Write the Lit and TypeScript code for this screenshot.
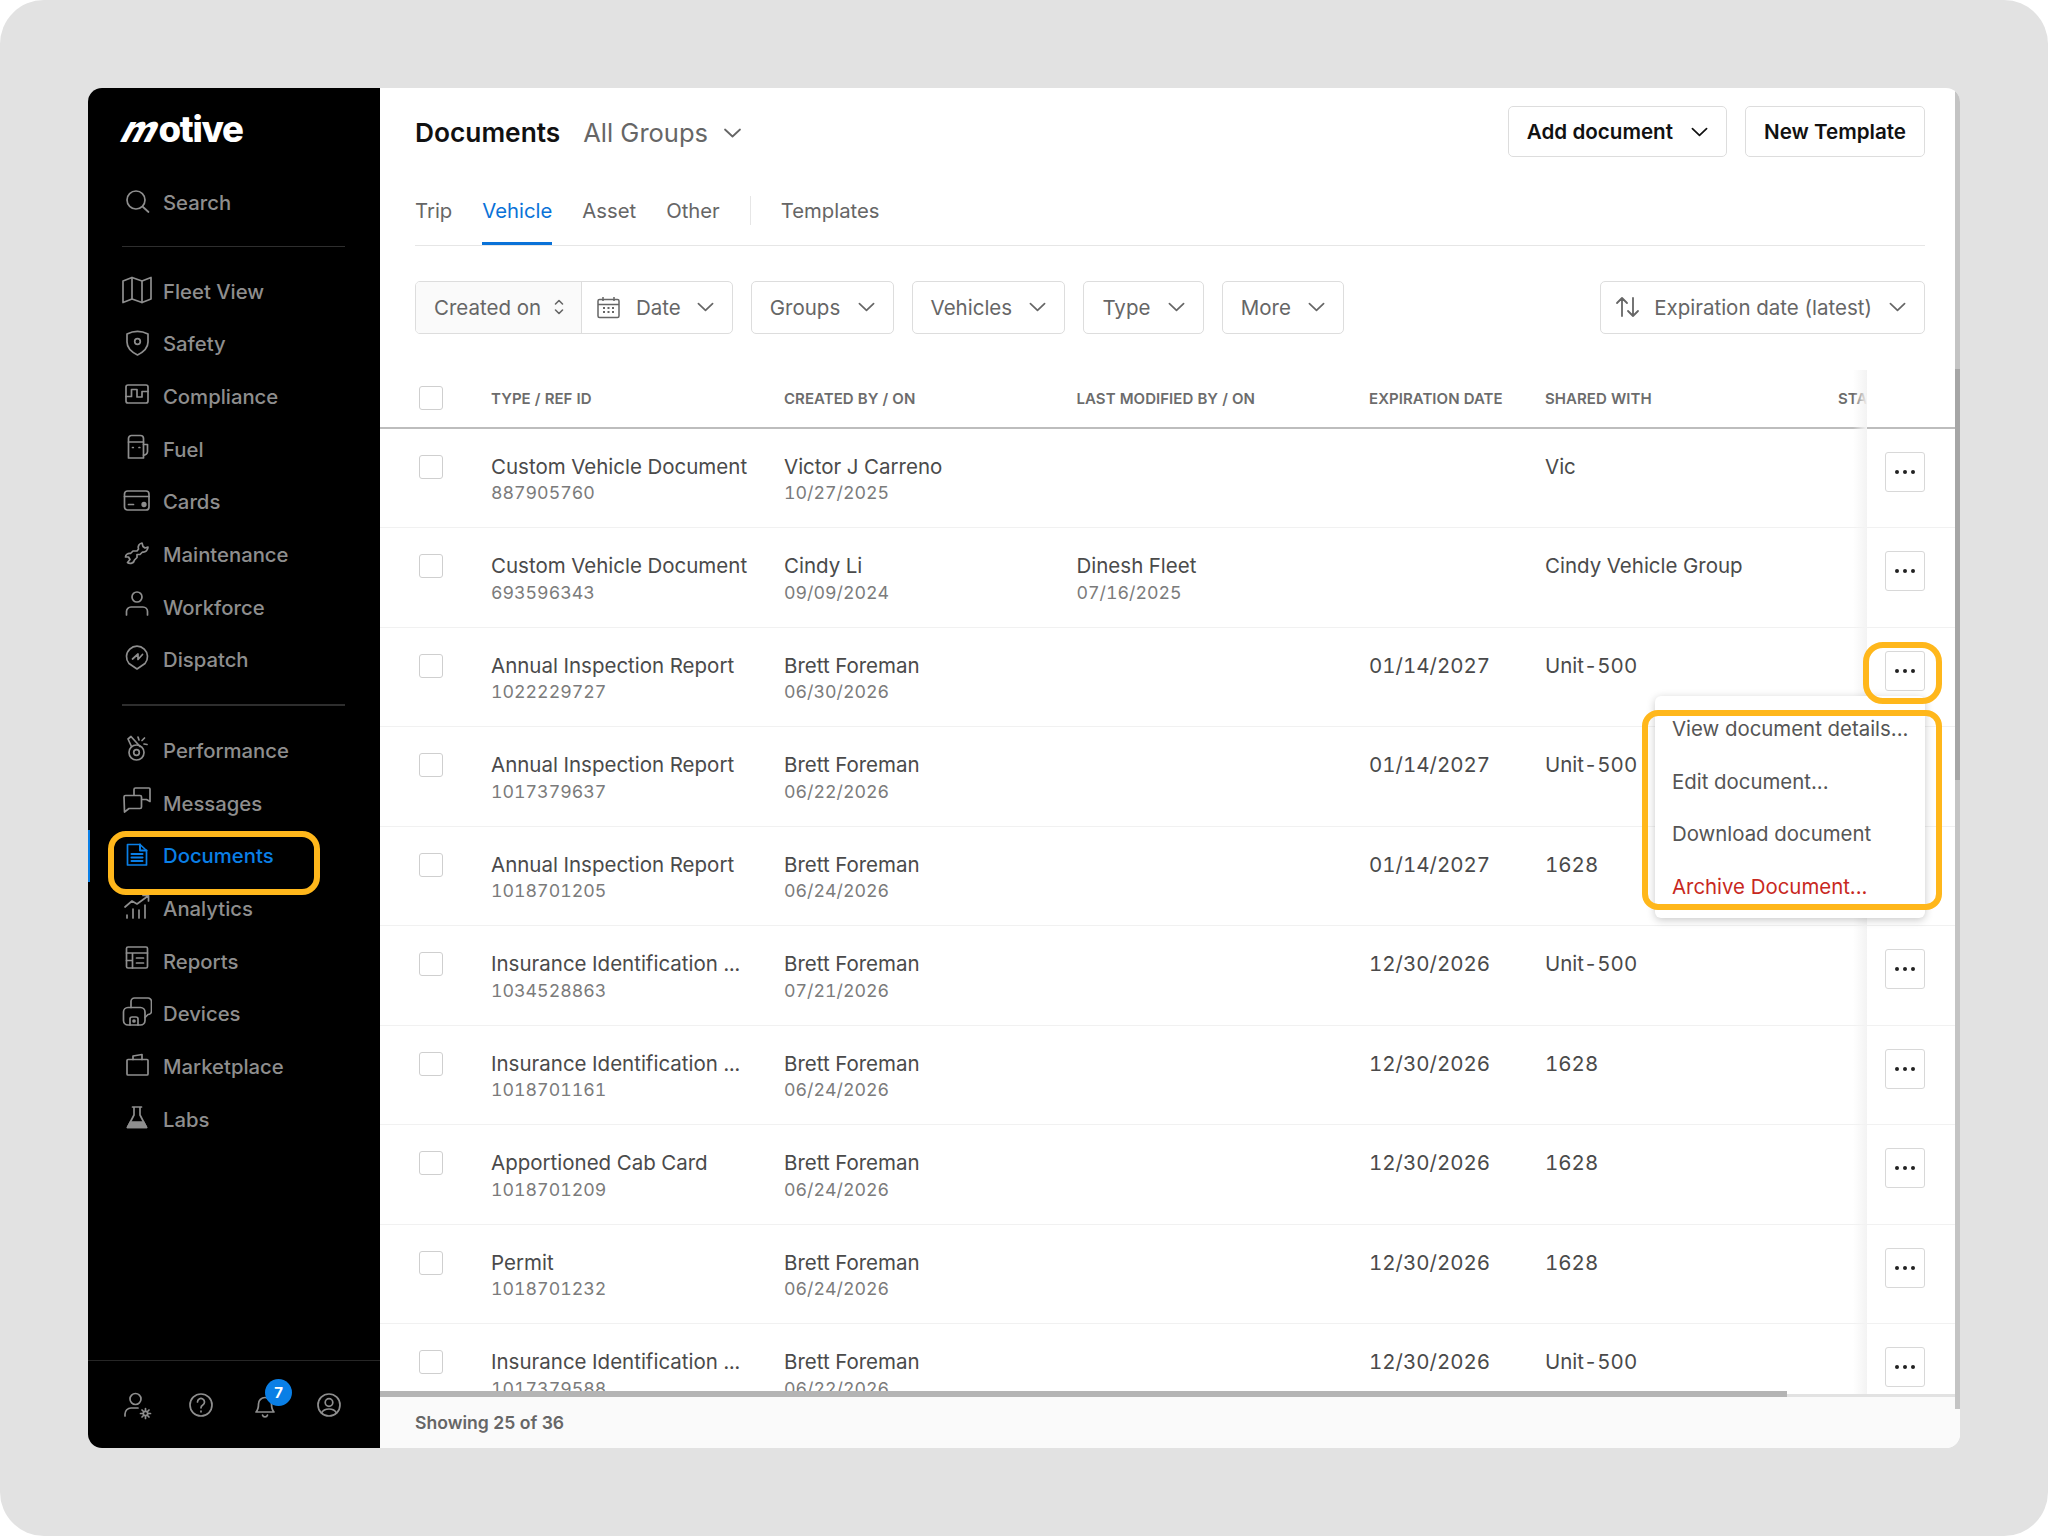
import { LitElement, html, css, svg } from "lit";
import { customElement } from "lit/decorators.js";

const navIcons: Record<string, unknown> = {
  search: svg`<circle cx="14" cy="15" r="9"/><path d="M21 22l5.500 5"/>`,
  fleet: svg`<path d="M1 7L10 3.500l10 3.500 9-3.500V25l-9 3.500L10 25l-9 3.500z"/><path d="M10 3.500V25M20 7v21.500"/>`,
  safety: svg`<path d="M5 7c6.500-3.200 14.500-3.200 21 0v8c0 6-4.500 10-10.500 13C9.500 25 5 21 5 15z"/><circle cx="15.500" cy="14.500" r="2.800"/>`,
  compliance: svg`<rect x="4" y="6" width="22" height="18" rx="2"/><path d="M4 17.500h5.500V10.500H15v7.500h5V12.500h6"/>`,
  fuel: svg`<path d="M6.500 26V6.500a3 3 0 0 1 3-3h9a3 3 0 0 1 3 3V26z"/><path d="M6.500 10h15M21.500 12.500h4v7a3.500 3.500 0 0 1-4 3.500"/><path d="M10.500 15.500h.8M17 15.500h.8"/>`,
  cards: svg`<rect x="2.500" y="6" width="24.500" height="19" rx="3"/><path d="M2.500 11.500H27M6.500 19.500h5"/><circle cx="22" cy="19.500" r="1.800" fill="currentColor"/>`,
  maintenance: svg`<path transform="translate(0 2)" d="M20 4c-3 .5-4.500 3.500-3.500 6L15 12h-4l-2.500 2.500C6 14 3.500 15.500 3.500 18l3 0L8 20.500l-2.500 3c2.500 2 6.500.5 7-2.500l2.500-2.500v-3h3l2.500-2.500c3 .5 5.500-2 5.500-5l-3 1-2-1.500z"/>`,
  workforce: svg`<circle cx="15" cy="7" r="5"/><path d="M4.500 25v-3.500a4.500 4.500 0 0 1 4.500-4.500h12a4.500 4.500 0 0 1 4.500 4.500V25"/>`,
  dispatch: svg`<path d="M15 26L7 20.500a10.500 10.500 0 1 1 16 0z"/><path d="M10.500 16l5.500-5v5.500l4.500-5"/>`,
  performance: svg`<circle cx="14.500" cy="18.500" r="7.500"/><circle cx="14.500" cy="18.500" r="2.800"/><path d="M6 5l3-2.500 9 10M6 5l3.500 7.500"/><path d="M16 3l1 3M22.500 4l-2.500 2.500M25 10.500l-3-.5"/>`,
  messages: svg`<path d="M12 9V3.500A1.500 1.500 0 0 1 13.500 2H27a1 1 0 0 1 1 1v12.500l-3.500-2H20"/><path d="M2 11a1.500 1.500 0 0 1 1.500-1.500H18a1.500 1.500 0 0 1 1.500 1.500v10a1.500 1.500 0 0 1-1.500 1.500H7L2.500 26z"/>`,
  documents: svg`<path d="M5.500 5.500h12.500l6.500 6V26H5.500z"/><path d="M18 5.500v6h6.500M9.500 15h11M9.500 18.500h11M9.500 22h11" stroke-width="2"/>`,
  analytics: svg`<path d="M3 15l7-6 5 3L26 4M21 3.500h5.500V9"/><path d="M5 23v3M11 17v9M17 18v8M23 13v13"/>`,
  reports: svg`<rect x="4.500" y="3" width="21" height="21" rx="1.500"/><path d="M4.500 9h21M10.500 9v15M4.500 16.500h6M14.500 14h7M14.500 19h7"/>`,
  devices: svg`<path d="M9 10.500V4.500A3.500 3.500 0 0 1 12.500 1H26a3.500 3.500 0 0 1 3.500 3.500V14a3.500 3.500 0 0 1-3.500 3.500L23 20.500"/><rect x="1.500" y="10.500" width="21.500" height="17.500" rx="4.500"/><path d="M8 28v-6a2 2 0 0 1 2-2h4a2 2 0 0 1 2 2v6"/><circle cx="12" cy="24" r="1" fill="currentColor"/>`,
  marketplace: svg`<path d="M6 9.500h19a1 1 0 0 1 1 1V24a1 1 0 0 1-1 1H6a1 1 0 0 1-1-1V10.500a1 1 0 0 1 1-1z"/><path d="M11 9.500V6l9-1.500v5"/>`,
  labs: svg`<path d="M10.500 5h9M12 5v8L5.500 25.500h19L18 13V5"/><path d="M8.500 20h13l3 5.500h-19z" fill="currentColor"/>`,
  usergear: svg`<circle cx="13.500" cy="9" r="5.500"/><path d="M3 26v-2a6 6 0 0 1 6-6h7"/><circle cx="23.500" cy="23.500" r="2.200"/><path d="M23.500 18.500v2M23.500 26.500v2M18.500 23.500h2M26.500 23.500h2M20 20l1.500 1.500M25.500 25.500l1.500 1.500M27 20l-1.500 1.500M21.500 25.500L20 27"/>`,
  help: svg`<circle cx="15" cy="15" r="11"/><path d="M11.500 12a3.500 3.500 0 1 1 5.300 3c-1.200.7-1.800 1.400-1.800 2.800"/><path d="M15 21v.8"/>`,
  bell: svg`<path d="M6 22c2-2 2.500-4 2.500-8a6.500 6.500 0 0 1 13 0c0 4 .5 6 2.500 8z"/><path d="M12.500 25a2.600 2.600 0 0 0 5 0"/>`,
  profile: svg`<circle cx="15" cy="15" r="11"/><circle cx="15" cy="12.500" r="3.800"/><path d="M7.500 23c1.500-3 4-4 7.500-4s6 1 7.500 4"/>`,
};

const navTop = [
  ["Fleet View", "fleet"],
  ["Safety", "safety"],
  ["Compliance", "compliance"],
  ["Fuel", "fuel"],
  ["Cards", "cards"],
  ["Maintenance", "maintenance"],
  ["Workforce", "workforce"],
  ["Dispatch", "dispatch"],
];

const navBottom = [
  ["Performance", "performance"],
  ["Messages", "messages"],
  ["Documents", "documents"],
  ["Analytics", "analytics"],
  ["Reports", "reports"],
  ["Devices", "devices"],
  ["Marketplace", "marketplace"],
  ["Labs", "labs"],
];

const rows = [
  ["Custom Vehicle Document", "887905760", "Victor J Carreno", "10/27/2025", "", "", "", "Vic"],
  ["Custom Vehicle Document", "693596343", "Cindy Li", "09/09/2024", "Dinesh Fleet", "07/16/2025", "", "Cindy Vehicle Group"],
  ["Annual Inspection Report", "1022229727", "Brett Foreman", "06/30/2026", "", "", "01/14/2027", "Unit-500"],
  ["Annual Inspection Report", "1017379637", "Brett Foreman", "06/22/2026", "", "", "01/14/2027", "Unit-500"],
  ["Annual Inspection Report", "1018701205", "Brett Foreman", "06/24/2026", "", "", "01/14/2027", "1628"],
  ["Insurance Identification ...", "1034528863", "Brett Foreman", "07/21/2026", "", "", "12/30/2026", "Unit-500"],
  ["Insurance Identification ...", "1018701161", "Brett Foreman", "06/24/2026", "", "", "12/30/2026", "1628"],
  ["Apportioned Cab Card", "1018701209", "Brett Foreman", "06/24/2026", "", "", "12/30/2026", "1628"],
  ["Permit", "1018701232", "Brett Foreman", "06/24/2026", "", "", "12/30/2026", "1628"],
  ["Insurance Identification ...", "1017379588", "Brett Foreman", "06/22/2026", "", "", "12/30/2026", "Unit-500"],
];

const chevron = html`<svg class="chev" viewBox="0 0 18 10"><path d="M1.500 1.500L9 8.500l7.500-7"/></svg>`;

function icon(name: string) {
  return html`<svg class="nav-icon" viewBox="0 0 30 30">${navIcons[name]}</svg>`;
}

@customElement("app-root")
export class AppRoot extends LitElement {
  static styles = css`
    :host {
      display: block;
      font-family: Inter, "Liberation Sans", sans-serif;
    }
    .page {
      width: 2048px;
      height: 1536px;
      box-sizing: border-box;
      padding: 88px;
      background: #e2e2e2;
      border-radius: 44px;
    }
    .window {
      position: relative;
      display: flex;
      width: 1872px;
      height: 1360px;
      background: #fff;
      border-radius: 14px;
      overflow: hidden;
    }

    /* sidebar */
    .side {
      width: 292px;
      flex: none;
      display: flex;
      flex-direction: column;
      background: #000;
      color: #8e8e8e;
      box-sizing: border-box;
      padding-top: 19px;
    }
    .logo {
      margin-left: 37px;
      height: 44px;
      line-height: 44px;
      color: #fff;
      font-size: 36.500px;
      font-weight: 800;
      letter-spacing: -1.300px;
    }
    .logo span {
      display: inline-block;
      transform: skewX(-28deg);
      margin-right: 1px;
    }
    .nav {
      display: flex;
      align-items: center;
      gap: 11px;
      height: 52.7px;
      padding-left: 34px;
      font-size: 20.300px;
      font-weight: 500;
      white-space: nowrap;
    }
    .nav .nav-icon {
      margin-bottom: 4px;
    }
    .nav.search {
      margin-top: 25px;
    }
    .nav.active {
      color: #0a7fe6;
      box-shadow: inset 2px 0 0 #0a7fe6;
    }
    .nav-icon {
      width: 30px;
      height: 30px;
      flex: none;
      fill: none;
      stroke: currentColor;
      stroke-width: 1.7;
      stroke-linejoin: round;
      stroke-linecap: round;
    }
    .rule {
      height: 1px;
      margin: 0 35px 0 34px;
      background: #2e2e2e;
    }
    .rule.one {
      margin-top: 17px;
      margin-bottom: 18px;
    }
    .rule.two {
      height: 2px;
      margin-top: 18px;
      margin-bottom: 18px;
    }
    .side-foot {
      margin-top: auto;
      height: 88px;
      border-top: 1px solid #262626;
      display: flex;
      align-items: center;
      gap: 34px;
      padding-left: 34px;
      box-sizing: border-box;
    }
    .bell {
      position: relative;
      display: flex;
    }
    .badge {
      position: absolute;
      left: 15px;
      top: -11px;
      width: 27px;
      height: 27px;
      border-radius: 50%;
      background: #0a7fe6;
      color: #fff;
      font-size: 15px;
      font-weight: 700;
      line-height: 27px;
      text-align: center;
    }

    /* main */
    .main {
      position: relative;
      flex: 1;
      min-width: 0;
      display: flex;
      flex-direction: column;
    }
    .top {
      padding: 18px 35px 0 35px;
    }
    .head {
      display: flex;
      align-items: center;
      height: 51px;
    }
    .head h1 {
      margin: 2px 0 0;
      font-size: 26.300px;
      font-weight: 600;
      color: #111;
    }
    .groups {
      display: flex;
      align-items: center;
      gap: 15px;
      margin: 2px 0 0 23px;
      font-size: 25.500px;
      color: #666;
    }
    .groups .chev {
      width: 19px;
    }
    .btn {
      height: 51px;
      box-sizing: border-box;
      border: 1.500px solid #ddd;
      border-radius: 5px;
      background: #fff;
      font-family: inherit;
      font-size: 20.600px;
      font-weight: 600;
      color: #111;
      display: flex;
      align-items: center;
      padding: 0 18px;
      gap: 18px;
    }
    .btn.add {
      margin-left: auto;
      margin-right: 18px;
    }
    .chev {
      width: 17px;
      height: 10px;
      flex: none;
      fill: none;
      stroke: currentColor;
      stroke-width: 1.800;
      stroke-linecap: round;
      stroke-linejoin: round;
    }
    .tabs {
      display: flex;
      margin-top: 39px;
      height: 49px;
      gap: 30px;
      border-bottom: 1.500px solid #e6e6e6;
      font-size: 20.300px;
      color: #666;
    }
    .tab {
      box-sizing: border-box;
      height: 49px;
      line-height: 29px;
      border-bottom: 3px solid transparent;
    }
    .tab.on {
      color: #0a72d8;
      border-bottom-color: #0a72d8;
    }
    .tab-sep {
      width: 1px;
      height: 29px;
      background: #e6e6e6;
    }
    .filters {
      display: flex;
      gap: 18px;
      margin-top: 35px;
      font-size: 20.500px;
      color: #666;
    }
    .filter {
      height: 52.500px;
      box-sizing: border-box;
      display: flex;
      align-items: center;
      gap: 17.300px;
      padding: 0 18px;
      border: 1.500px solid #ddd;
      border-radius: 5px;
      background: #fff;
      white-space: nowrap;
    }
    .filter.date {
      padding: 0;
      gap: 0;
    }
    .created {
      display: flex;
      align-items: center;
      justify-content: space-between;
      width: 166px;
      height: 100%;
      box-sizing: border-box;
      padding: 0 17px 0 18px;
      background: #fafafa;
      border-right: 1.500px solid #ddd;
      border-radius: 4px 0 0 4px;
    }
    .dateval {
      display: flex;
      align-items: center;
      padding: 0 18px 0 15px;
      gap: 16px;
    }
    .filter.sort {
      margin-left: auto;
      padding: 0 18px 0 14px;
      gap: 14px;
    }
    .filter.sort .chev {
      margin-left: 3px;
    }

    /* table */
    .table {
      position: relative;
      margin-top: 36.500px;
      flex: 1;
      min-height: 0;
      overflow: hidden;
    }
    .row {
      display: grid;
      grid-template-columns: 111px 293px 292.500px 292.500px 176px 293px 29px 93px;
      height: 99.550px;
      box-sizing: border-box;
      border-bottom: 1.500px solid #f1f1f1;
      font-size: 20.500px;
      color: #4a4a4a;
      font-variant-numeric: tabular-nums;
    }
    .row.headrow {
      height: 58.500px;
      border-bottom: 2.500px solid #bdbdbd;
      font-size: 15px;
      font-weight: 600;
      color: #6c6c6c;
      align-items: center;
      letter-spacing: 0.050px;
    }
    .cell {
      padding-top: 25px;
      white-space: nowrap;
      line-height: 25.500px;
      overflow: hidden;
    }
    .headrow .cell {
      padding: 0;
    }
    .sub {
      color: #7b7b7b;
      font-size: 17.800px;
    }
    .check {
      width: 24px;
      height: 24px;
      box-sizing: border-box;
      border: 1.500px solid #cfcfcf;
      border-radius: 3px;
      margin: 26px 0 0 39px;
      background: #fff;
    }
    .headrow .check {
      margin-top: 0;
    }
    .act {
      background: #fff;
    }
    .dots {
      width: 40px;
      height: 40px;
      box-sizing: border-box;
      margin: 23px 0 0 18px;
      border: 1.500px solid #d8d8d8;
      border-radius: 3px;
      background: #fff;
      display: flex;
      align-items: center;
      justify-content: center;
      gap: 4px;
    }
    .dots i {
      width: 4px;
      height: 4px;
      border-radius: 50%;
      background: #222;
    }
    .shade {
      position: absolute;
      top: 0;
      bottom: 0;
      right: 93px;
      width: 14px;
      background: linear-gradient(to right, rgba(240, 240, 240, 0), #f3f3f3);
    }
    .hbar {
      position: absolute;
      left: 0;
      right: 0;
      bottom: 0;
      height: 3px;
      background: #e2e2e2;
    }
    .hbar i {
      position: absolute;
      left: 0;
      bottom: 0;
      width: 1407px;
      height: 6px;
      background: #b4b4b4;
    }
    .foot {
      height: 51px;
      flex: none;
      display: flex;
      align-items: center;
      padding-left: 35px;
      background: #fafafa;
      font-size: 17.600px;
      font-weight: 600;
      color: #666;
    }
    .vbar {
      position: absolute;
      right: 0;
      top: 0;
      width: 5px;
      height: 1321px;
      background: #c4c4c4;
    }
    .vbar i {
      position: absolute;
      left: 0;
      top: 281px;
      width: 5px;
      height: 411px;
      background: #a6a6a6;
    }

    /* overlays */
    .menu {
      position: absolute;
      left: 1275px;
      top: 608px;
      width: 270px;
      height: 222px;
      box-sizing: border-box;
      padding-top: 7px;
      background: #fff;
      border-radius: 6px;
      box-shadow: 0 2px 8px rgba(0, 0, 0, 0.22);
      font-size: 20.400px;
      color: #555;
    }
    .menu div {
      height: 52.600px;
      line-height: 52.600px;
      padding-left: 17px;
      white-space: nowrap;
    }
    .menu .danger {
      color: #c8281e;
    }
    .mark {
      position: absolute;
      box-sizing: border-box;
      border: 6px solid #ffb71b;
    }
    .mark.nav-mark {
      left: 20px;
      top: 743px;
      width: 212px;
      height: 64px;
      border-radius: 18px;
    }
    .mark.btn-mark {
      left: 1775px;
      top: 554px;
      width: 79px;
      height: 62px;
      border-radius: 20px;
    }
    .mark.menu-mark {
      left: 1554px;
      top: 622px;
      width: 300px;
      height: 200px;
      border-radius: 16px;
    }
  `;

  renderNav([label, name]: string[]) {
    const active = label === "Documents";
    return html`<div class="nav ${active ? "active" : ""}">${icon(name)}<span>${label}</span></div>`;
  }

  renderRow(r: string[]) {
    return html`<div class="row">
      <div><div class="check"></div></div>
      <div class="cell">${r[0]}<br /><span class="sub">${r[1]}</span></div>
      <div class="cell">${r[2]}<br /><span class="sub">${r[3]}</span></div>
      <div class="cell">${r[4]}<br /><span class="sub">${r[5]}</span></div>
      <div class="cell">${r[6]}</div>
      <div class="cell">${r[7]}</div>
      <div></div>
      <div class="act"><div class="dots"><i></i><i></i><i></i></div></div>
    </div>`;
  }

  render() {
    return html`<div class="page">
      <div class="window">
        <aside class="side">
          <div class="logo"><span>m</span>otive</div>
          <div class="nav search">${icon("search")}<span>Search</span></div>
          <div class="rule one"></div>
          ${navTop.map((n) => this.renderNav(n))}
          <div class="rule two"></div>
          ${navBottom.map((n) => this.renderNav(n))}
          <div class="side-foot">
            ${icon("usergear")} ${icon("help")}
            <div class="bell">${icon("bell")}<span class="badge">7</span></div>
            ${icon("profile")}
          </div>
        </aside>
        <main class="main">
          <div class="top">
            <div class="head">
              <h1>Documents</h1>
              <div class="groups">All Groups ${chevron}</div>
              <div class="btn add">Add document ${chevron}</div>
              <div class="btn">New Template</div>
            </div>
            <div class="tabs">
              <div class="tab">Trip</div>
              <div class="tab on">Vehicle</div>
              <div class="tab">Asset</div>
              <div class="tab">Other</div>
              <div class="tab-sep"></div>
              <div class="tab">Templates</div>
            </div>
            <div class="filters">
              <div class="filter date">
                <div class="created">
                  Created on
                  <svg width="10" height="20" viewBox="0 0 10 20" fill="none" stroke="currentColor" stroke-width="1.600" stroke-linecap="round" stroke-linejoin="round"><path d="M1.500 7L5 3.500 8.500 7M1.500 13L5 16.500 8.500 13"/></svg>
                </div>
                <div class="dateval">
                  <svg width="23" height="23" viewBox="0 0 23 23" fill="none" stroke="currentColor" stroke-width="1.500"><rect x="1" y="3.500" width="21" height="18" rx="1.500"/><path d="M1 8.500h21M6 1v4M17 1v4"/><path d="M6 12h2M10.500 12h2M15 12h2M6 16h2M10.500 16h2M15 16h2" stroke-width="2"/></svg>
                  Date ${chevron}
                </div>
              </div>
              <div class="filter">Groups ${chevron}</div>
              <div class="filter">Vehicles ${chevron}</div>
              <div class="filter">Type ${chevron}</div>
              <div class="filter">More ${chevron}</div>
              <div class="filter sort">
                <svg width="25" height="22" viewBox="0 0 25 22" fill="none" stroke="currentColor" stroke-width="1.800" stroke-linecap="round" stroke-linejoin="round"><path d="M7 20V2M2 7l5-5 5 5M18 2v18M13 15l5 5 5-5"/></svg>
                Expiration date (latest) ${chevron}
              </div>
            </div>
          </div>
          <div class="table">
            <div class="row headrow">
              <div><div class="check"></div></div>
              <div class="cell">TYPE / REF ID</div>
              <div class="cell">CREATED BY / ON</div>
              <div class="cell">LAST MODIFIED BY / ON</div>
              <div class="cell">EXPIRATION DATE</div>
              <div class="cell">SHARED WITH</div>
              <div class="cell">STATUS</div>
              <div class="act"></div>
            </div>
            ${rows.map((r) => this.renderRow(r))}
            <div class="shade"></div>
            <div class="hbar"><i></i></div>
          </div>
          <div class="foot">Showing 25 of 36</div>
          <div class="vbar"><i></i></div>
          <div class="menu">
            <div>View document details...</div>
            <div>Edit document...</div>
            <div>Download document</div>
            <div class="danger">Archive Document...</div>
          </div>
        </main>
        <div class="mark nav-mark"></div>
        <div class="mark btn-mark"></div>
        <div class="mark menu-mark"></div>
      </div>
    </div>`;
  }
}
